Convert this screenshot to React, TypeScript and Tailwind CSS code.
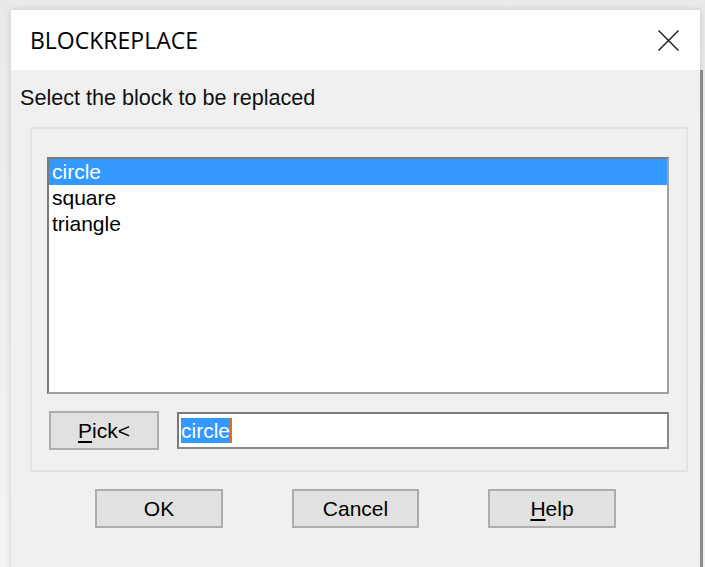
import React from "react";

const ui = { fontFamily: '"Liberation Sans", Arial, sans-serif' };
const titleFont = { fontFamily: '"Open Sans", "Noto Sans", sans-serif' };

function Button({ label, hot, rest, className }: { label?: string; hot?: string; rest?: string; className: string }) {
  return (
    <button
      className={`flex items-center justify-center bg-[#e1e1e1] border-2 border-[#adadad] text-[21px] text-black ${className}`}
      style={ui}
    >
      {hot ? (
        <span>
          <span className="underline underline-offset-[3px]">{hot}</span>
          {rest}
        </span>
      ) : (
        label
      )}
    </button>
  );
}

export default function App() {
  const items = ["circle", "square", "triangle"];

  return (
    <div className="w-[705px] h-[567px] overflow-hidden bg-gradient-to-b from-[#e9e9e9] to-[#f4f4f4] pt-[10px] pl-[11px]">
      <div className="w-[689px] h-[600px] flex flex-col bg-[#f0f0f0] shadow-[0_0_6px_rgba(0,0,0,0.15)]">
        {/* title bar */}
        <div className="h-[60px] bg-white flex items-center justify-between pl-[19px] pr-[20px]">
          <span className="text-[23px] text-black" style={titleFont}>
            BLOCKREPLACE
          </span>
          <svg width="23" height="23" viewBox="0 0 23 23" stroke="#222" strokeWidth="1.5" fill="none">
            <path d="M1.5 1.5 L21.5 21.5 M21.5 1.5 L1.5 21.5" />
          </svg>
        </div>

        {/* body */}
        <div className="flex-1 flex flex-col border-r-[3px] border-[#8c8c8c] -mr-[3px]">
          <div className="pl-[9px] pt-[17px] text-[21.6px] text-[#111] leading-[21px]" style={ui}>
            Select the block to be replaced
          </div>

          <div className="ml-[19px] mr-[12px] mt-[19px] h-[345px] border-2 border-[#e3e3e3] pt-[28px] pl-[15px] pr-[17px]">
            <div className="h-[237px] bg-white border-2 border-t-[#7a7a7a] border-l-[#7a7a7a] border-b-[#a0a0a0] border-r-[#a0a0a0] text-[21px] leading-[26px]" style={ui}>
              {items.map((item, i) => (
                <div key={item} className={`pl-[3px] ${i === 0 ? "bg-[#3399ff] text-white" : "text-black"}`}>
                  {item}
                </div>
              ))}
            </div>

            <div className="flex items-center mt-[17px] gap-[18px]">
              <Button hot="P" rest="ick<" className="ml-[2px] w-[110px] h-[39px]" />
              <div className="flex-1 h-[37px] bg-white border-2 border-t-[#7a7a7a] border-l-[#7a7a7a] border-b-[#8a8a8a] border-r-[#8a8a8a] flex items-center pl-[2px] text-[21px]" style={ui}>
                <span className="bg-[#3399ff] text-white leading-[25px] border-r-2 border-[#e07020]">circle</span>
              </div>
            </div>
          </div>

          <div className="flex mt-[17px] pl-[84px] gap-[69px]">
            <Button label="OK" className="w-[128px] h-[39px]" />
            <Button label="Cancel" className="w-[127px] h-[39px]" />
            <Button hot="H" rest="elp" className="w-[128px] h-[39px]" />
          </div>
        </div>
      </div>
    </div>
  );
}
